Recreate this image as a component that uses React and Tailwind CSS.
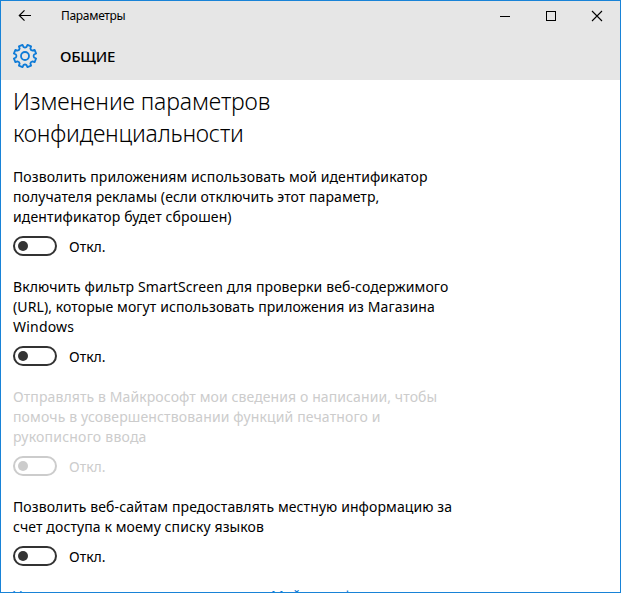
import clsx from "clsx";

const options = [
    {
        lines: [
            { text: "Позволить приложениям использовать мой идентификатор", spacing: "tracking-[0.09px]" },
            { text: "получателя рекламы (если отключить этот параметр,", spacing: "tracking-[0.06px]" },
            { text: "идентификатор будет сброшен)", spacing: "tracking-[0.13px]" },
        ],
    },
    {
        lines: [
            { text: "Включить фильтр SmartScreen для проверки веб-содержимого", spacing: "tracking-[0.11px]" },
            { text: "(URL), которые могут использовать приложения из Магазина", spacing: "tracking-[0.1px]" },
            { text: "Windows", spacing: "tracking-[0.2px]" },
        ],
    },
    {
        disabled: true,
        lines: [
            { text: "Отправлять в Майкрософт мои сведения о написании, чтобы", spacing: "tracking-[0.1px]" },
            { text: "помочь в усовершенствовании функций печатного и", spacing: "tracking-[0.14px]" },
            { text: "рукописного ввода", spacing: "tracking-[0.22px]" },
        ],
    },
    {
        lines: [
            { text: "Позволить веб-сайтам предоставлять местную информацию за", spacing: "tracking-[0.1px]" },
            { text: "счет доступа к моему списку языков", spacing: "tracking-[0.1px]" },
        ],
    },
];

// eight teeth, notches on the axes
function gearPath() {
    const point = (r, deg) => {
        const a = (deg * Math.PI) / 180;
        return `${(13 + r * Math.cos(a)).toFixed(2)} ${(13 + r * Math.sin(a)).toFixed(2)}`;
    };
    let d = "";
    for (let i = 0; i < 8; i++) {
        const c = i * 45 + 22.5;
        d += `${i === 0 ? "M" : "L"}${point(9.2, c - 13)} L${point(11.4, c - 10)} L${point(11.4, c + 10)} L${point(9.2, c + 13)} Q${point(8, c + 22.5)} ${point(9.2, c + 32)} `;
    }
    return d + "Z";
}

function GearIcon() {
    return (
        <svg className="w-[26px] h-[26px]" viewBox="0 0 26 26" fill="none" stroke="#0f7bd7" strokeWidth="1.8" strokeLinejoin="round">
            <path d={gearPath()} />
            <circle cx="13" cy="13" r="4" />
        </svg>
    );
}

function Toggle({ disabled }) {
    return (
        <button
            type="button"
            role="switch"
            aria-checked="false"
            disabled={disabled}
            className={clsx(
                "flex h-5 w-11 items-center rounded-full border-2 pl-[3px]",
                disabled ? "border-[#cccccc]" : "border-[#333333]"
            )}
        >
            <span className={clsx("h-2.5 w-2.5 rounded-full", disabled ? "bg-[#cccccc]" : "bg-[#333333]")} />
        </button>
    );
}

function Option({ lines, disabled }) {
    return (
        <section className={clsx("mb-[21px]", disabled ? "text-[#cccccc]" : "text-black")}>
            <p className="text-[14px] leading-5 whitespace-nowrap">
                {lines.map(line => (
                    <span key={line.text} className={clsx("block w-fit", line.spacing)}>{line.text}</span>
                ))}
            </p>
            <div className="mt-[9px] flex h-5 items-center gap-3">
                <Toggle disabled={disabled} />
                <span className="pt-0.5 text-[14px] leading-5">Откл.</span>
            </div>
        </section>
    );
}

function App() {
    return (
        <div className="flex h-[593px] w-[621px] flex-col overflow-hidden border border-[#1883d7] bg-white font-['Noto_Sans',sans-serif] text-black">
            <header className="h-[79px] shrink-0 bg-[#e6e6e6]">
                <div className="flex h-[30px] items-center">
                    <svg className="ml-[17px] h-[14px] w-[14px]" viewBox="0 0 14 14" fill="none" stroke="black" strokeWidth="1.2">
                        <path d="M13 6.5H1.5M6.5 1.3L1.3 6.5l5.2 5.2" />
                    </svg>
                    <h1 className="ml-[29px] text-[12px] leading-4 tracking-[-0.3px]">Параметры</h1>
                    <div className="ml-auto flex">
                        <svg className="h-[30px] w-[46px]" viewBox="0 0 46 30" stroke="black" shapeRendering="crispEdges">
                            <path d="M18 15.5h10" />
                        </svg>
                        <svg className="h-[30px] w-[46px]" viewBox="0 0 46 30" fill="none" stroke="black" shapeRendering="crispEdges">
                            <path d="M18.5 10.5h9v9h-9z" />
                        </svg>
                        <svg className="h-[30px] w-[46px]" viewBox="0 0 46 30" stroke="black" strokeWidth="1.1">
                            <path d="M18 10l10 10M28 10L18 20" />
                        </svg>
                    </div>
                </div>
                <div className="flex h-[50px] items-center pl-[11px]">
                    <GearIcon />
                    <h2 className="ml-[22px] text-[15px] font-medium leading-5 tracking-[-0.25px]">ОБЩИЕ</h2>
                </div>
            </header>
            <main className="min-h-0 flex-1 overflow-hidden pl-3 pt-[5px]">
                <h3 className="mb-[18px] text-[23px] font-light leading-8">
                    <span className="block w-fit tracking-[-0.1px]">Изменение параметров</span>
                    <span className="block w-fit tracking-[-0.2px]">конфиденциальности</span>
                </h3>
                {options.map((option, i) => (
                    <Option key={i} {...option} />
                ))}
                <a href="#" className="-mt-px block text-[14px] leading-5 tracking-[0.35px] whitespace-nowrap text-[#0f7bd7]">
                    Управление параметрами рекламы Майкрософт
                </a>
            </main>
        </div>
    );
}

export default App;
